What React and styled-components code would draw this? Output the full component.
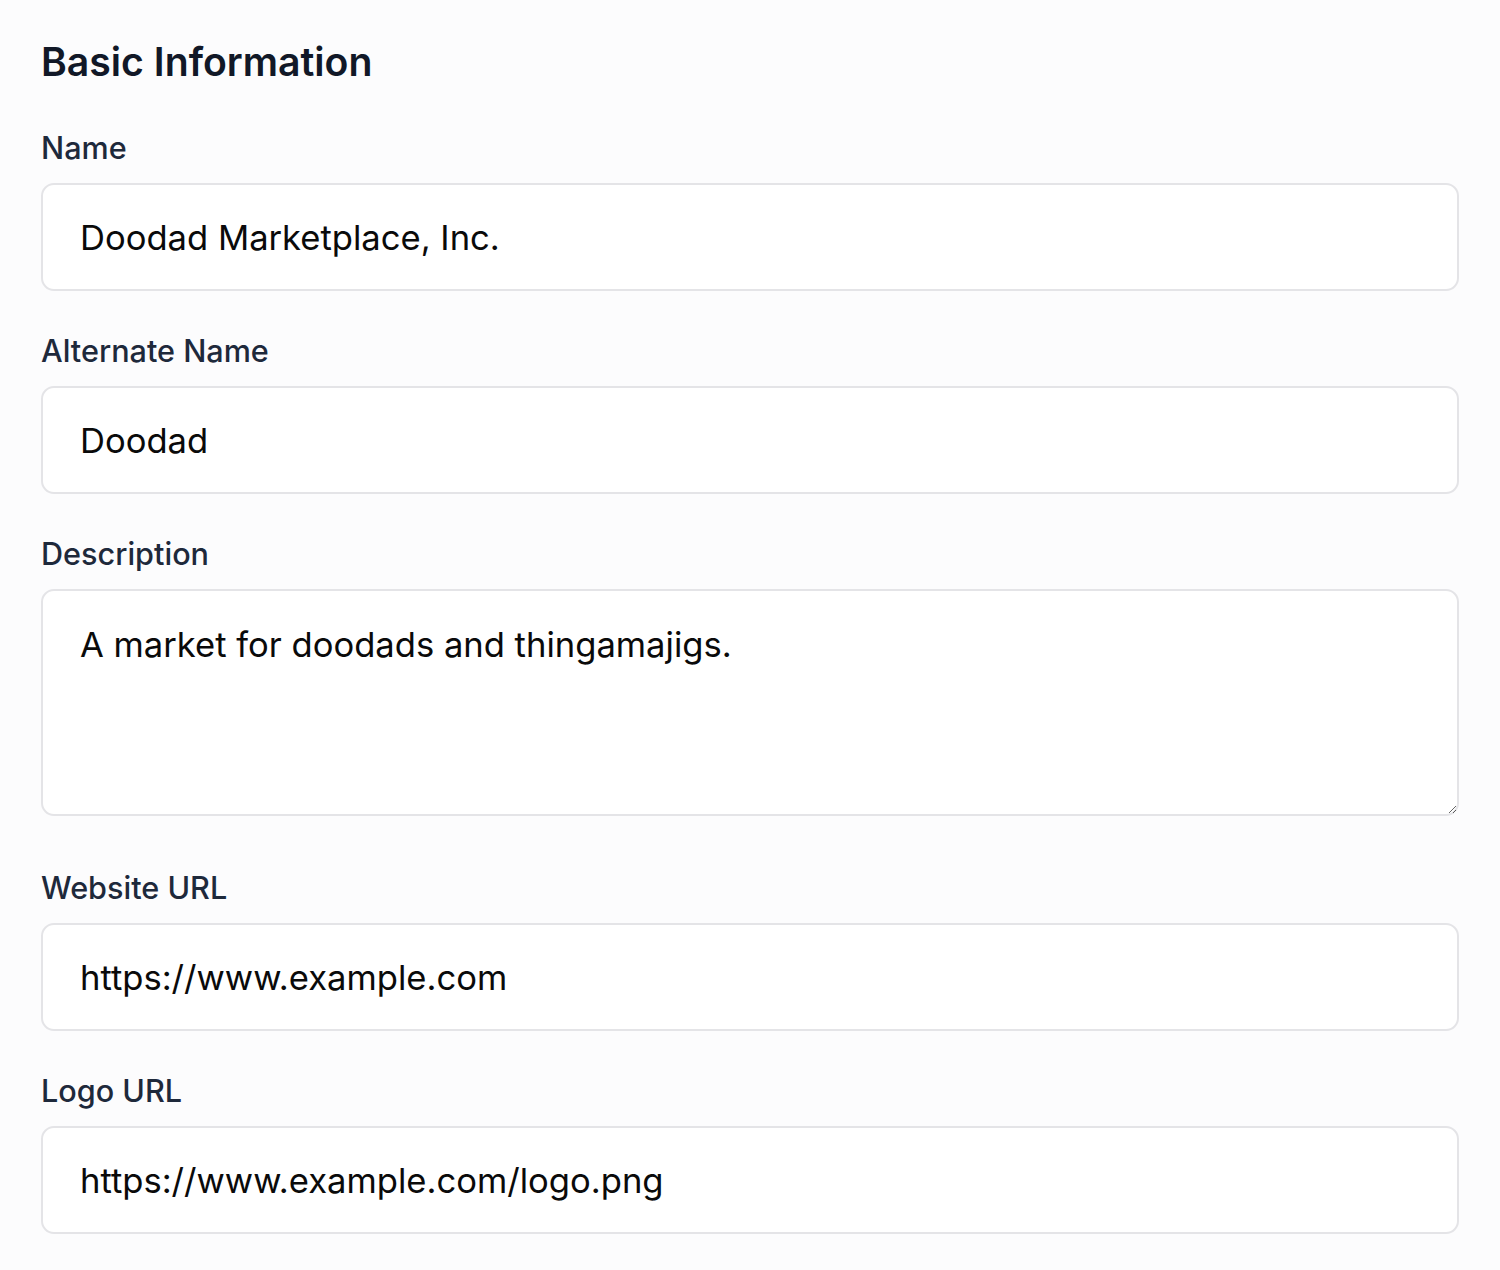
import React from "react";
import styled, { createGlobalStyle } from "styled-components";

const Global = createGlobalStyle`
  html, body {
    margin: 0;
    padding: 0;
    background: #fcfcfd;
  }
  body {
    font-family: Inter, "Noto Sans", sans-serif;
  }
`;

const Page = styled.div`
  box-sizing: border-box;
  width: 1500px;
  padding: 38px 41px 40px 41px;
`;

const Heading = styled.h2`
  margin: 0 0 42px 0;
  font-size: 39.2px;
  line-height: 48px;
  font-weight: 600;
  color: #111827;
`;

const Field = styled.div`
  display: flex;
  flex-direction: column;
  margin-bottom: ${(p) => (p.$gap ? p.$gap : 39)}px;
`;

const Label = styled.label`
  font-size: 30.6px;
  line-height: 40px;
  font-weight: 500;
  color: #1e293b;
  margin-bottom: 15px;
`;

const fieldBase = `
  box-sizing: border-box;
  width: 100%;
  border: 2px solid #e4e4e7;
  border-radius: 13px;
  background: #ffffff;
  font-family: Inter, "Noto Sans", sans-serif;
  font-size: 34.6px;
  color: #0a0a0a;
  outline: none;
`;

const Input = styled.input`
  ${fieldBase}
  height: 108px;
  padding: 0 37px;
`;

const TextArea = styled.textarea`
  ${fieldBase}
  display: block;
  height: 227px;
  padding: 30px 37px;
  line-height: 46px;
  resize: vertical;
`;

const fields = [
  { label: "Name", value: "Doodad Marketplace, Inc." },
  { label: "Alternate Name", value: "Doodad" },
  { label: "Description", value: "A market for doodads and thingamajigs.", multi: true },
  { label: "Website URL", value: "https://www.example.com" },
  { label: "Logo URL", value: "https://www.example.com/logo.png" },
];

export default function App() {
  return (
    <>
      <Global />
      <Page>
        <Heading>Basic Information</Heading>
        {fields.map((f) => (
          <Field key={f.label} $gap={f.multi ? 52 : 40}>
            <Label>{f.label}</Label>
            {f.multi ? (
              <TextArea defaultValue={f.value} />
            ) : (
              <Input defaultValue={f.value} />
            )}
          </Field>
        ))}
      </Page>
    </>
  );
}
